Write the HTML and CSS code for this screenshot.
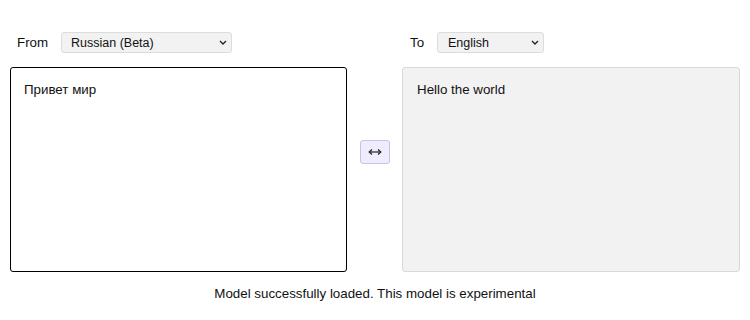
FILE: index.html
```html
<!DOCTYPE html>
<html lang="en">
<head>
<meta charset="utf-8">
<title>Translator</title>
<link rel="stylesheet" href="styles.css">
</head>
<body>
<main class="app">
  <div class="pane-head">
    <label class="lang-label" for="from">From</label>
    <select id="from" class="lang-select lang-from">
      <option>Russian (Beta)</option>
    </select>
  </div>
  <div class="spacer"></div>
  <div class="pane-head">
    <label class="lang-label" for="to">To</label>
    <select id="to" class="lang-select lang-to">
      <option>English</option>
    </select>
  </div>

  <div class="box box-input">Привет мир</div>
  <div class="swap-col">
    <button class="swap" type="button" aria-label="Swap languages">
      <svg class="swap-icon" width="14" height="8" viewBox="0 0 14 8" aria-hidden="true">
        <path d="M1.5 4h11" stroke="#222" stroke-width="1.2" fill="none"/>
        <path d="M4 1.5L1.2 4 4 6.5M10 1.5l2.8 2.5L10 6.5" stroke="#222" stroke-width="1.2" fill="none"/>
      </svg>
    </button>
  </div>
  <div class="box box-output">Hello the world</div>

  <p class="status">Model successfully loaded. This model is experimental</p>
</main>
</body>
</html>
```

FILE: styles.css
```css
html, body {
  margin: 0;
  padding: 0;
  background: #fff;
}
body {
  font-family: "Liberation Sans", Arial, sans-serif;
  color: #111;
}
.app {
  display: grid;
  grid-template-columns: 337px 30px 338px;
  column-gap: 12.5px;
  padding: 32px 10px 0 10px;
}
.pane-head {
  display: flex;
  align-items: center;
  height: 21px;
  margin-bottom: 14px;
}
.lang-label {
  font-size: 13.33px;
  padding-left: 7px;
  color: #111;
}
.pane-head:first-child .lang-label { width: 44px; }
.pane-head:nth-child(3) .lang-label { padding-left: 8px; width: 27px; }
.lang-select {
  -webkit-appearance: none;
  appearance: none;
  height: 21px;
  box-sizing: border-box;
  border: 1px solid #dcdcdc;
  border-radius: 3px;
  background-color: #f2f2f2;
  background-image: url("data:image/svg+xml;utf8,<svg xmlns='http://www.w3.org/2000/svg' width='8' height='5' viewBox='0 0 8 5'><path d='M1 1l3 3 3-3' fill='none' stroke='%23222' stroke-width='1.4'/></svg>");
  background-repeat: no-repeat;
  background-position: right 4px center;
  font-family: "Liberation Sans", Arial, sans-serif;
  font-size: 12.5px;
  color: #111;
  padding: 0 16px 0 9px;
}
.lang-from { width: 171px; }
.lang-to { width: 107px; padding-left: 10px; }
.box {
  box-sizing: border-box;
  height: 205px;
  padding: 14px 13px;
  font-size: 13.33px;
  border-radius: 3px;
}
.box-input {
  border: 1.5px solid #000;
  background: #fff;
}
.box-output {
  border: 1px solid #d9d9d9;
  background: #f2f2f2;
  padding-left: 14px;
}
.swap-col {
  display: flex;
  justify-content: center;
  align-items: flex-start;
}
.swap {
  margin-top: 73px;
  width: 30px;
  height: 24px;
  box-sizing: border-box;
  border: 1px solid #c7c3e6;
  border-radius: 3px;
  background: #efedfd;
  padding: 0;
  display: flex;
  align-items: center;
  justify-content: center;
}
.swap-icon {
  display: block;
}
.status {
  grid-column: 1 / -1;
  text-align: center;
  font-size: 13.33px;
  margin: 14px 0 0 0;
  color: #111;
}
```
